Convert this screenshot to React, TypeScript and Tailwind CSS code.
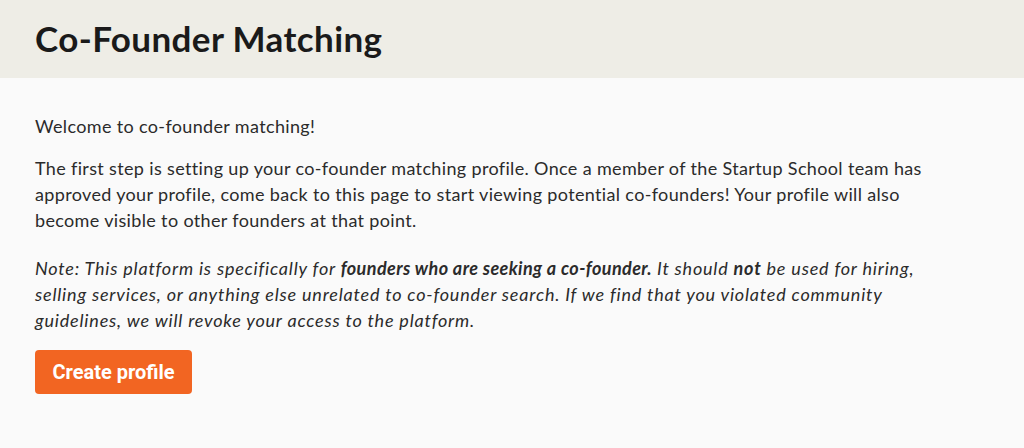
export default function App() {
  return (
    <div className="min-h-[448px] bg-[#fafafa] text-[#2b2b2b]" style={{ fontFamily: 'Lato, "Noto Sans", sans-serif' }}>
      <div className="h-[78px] bg-[#eeede6] px-[35px] flex items-center">
        <h1 className="text-[35px] font-bold text-[#1a1a1a] leading-none tracking-[0.4px] pb-[2px]">Co-Founder Matching</h1>
      </div>
      <div className="px-[35px] pt-[35px] text-[18px] leading-[26px] tracking-[0.35px]">
        <div className="w-[915px]">
          <p className="mb-[16px]">Welcome to co-founder matching!</p>
          <p className="mb-[22px]">
            The first step is setting up your co-founder matching profile. Once a member of the Startup School team has approved your profile, come back to this page to start viewing potential co-founders! Your profile will also become visible to other founders at that point.
          </p>
          <p className="mb-[17px] italic tracking-[0.8px]">
            Note: This platform is specifically for <b className="tracking-[0.4px]">founders who are seeking a co-founder.</b> It should <b>not</b> be used for hiring, selling services, or anything else unrelated to co-founder search. If we find that you violated community guidelines, we will revoke your access to the platform.
          </p>
        </div>
        <button className="h-[44px] w-[157px] rounded-[4px] bg-[#f26522] text-white text-[20px] font-bold tracking-normal" style={{ fontFamily: 'Roboto, sans-serif' }}>
          Create profile
        </button>
      </div>
    </div>
  );
}
